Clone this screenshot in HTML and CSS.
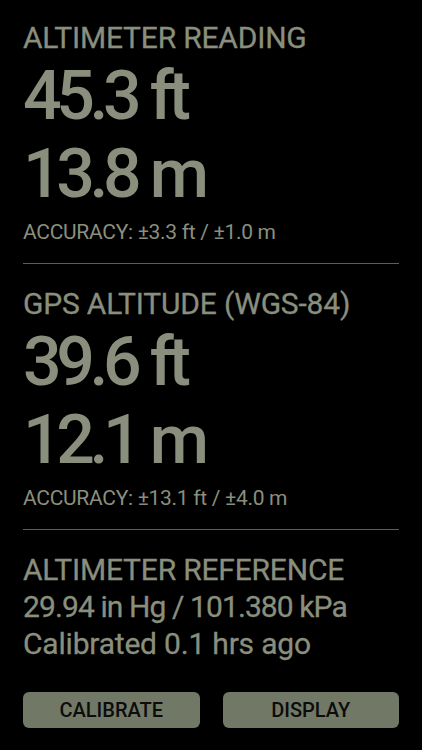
FILE: index.html
```html
<!DOCTYPE html>
<html lang="en">
<head>
    <meta charset="UTF-8">
    <meta name="viewport" content="width=device-width, initial-scale=1.0">
    <title>Altimeter</title>
    <link rel="stylesheet" href="styles.css">
</head>
<body>
    <div class="section first">
        <h2 class="label">ALTIMETER READING</h2>
        <div class="big">45.3 ft</div>
        <div class="big">13.8 m</div>
        <p class="accuracy">ACCURACY: ±3.3 ft / ±1.0 m</p>
    </div>

    <div class="section">
        <h2 class="label">GPS ALTITUDE (WGS-84)</h2>
        <div class="big">39.6 ft</div>
        <div class="big">12.1 m</div>
        <p class="accuracy">ACCURACY: ±13.1 ft / ±4.0 m</p>
    </div>

    <div class="section last">
        <h2 class="label">ALTIMETER REFERENCE</h2>
        <p class="info pressure">29.94 in Hg / 101.380 kPa</p>
        <p class="info">Calibrated 0.1 hrs ago</p>

        <div class="buttons">
            <button>CALIBRATE</button>
            <button>DISPLAY</button>
        </div>
    </div>
</body>
</html>
```
FILE: styles.css
```css
body {
    font-family: Roboto, "Liberation Sans", sans-serif;
    background-color: #000;
    color: #8a8f7d;
    margin: 0;
    padding: 0 23px;
    width: 376px;
    height: 750px;
    overflow: hidden;
}

.section {
    padding-top: 21px;
    padding-bottom: 18px;
    border-bottom: 1px solid #5c5f57;
}

.section.first {
    padding-top: 19px;
}

.section.last {
    border-bottom: none;
}

.label {
    font-size: 30px;
    font-weight: normal;
    line-height: 37px;
    letter-spacing: -0.2px;
    margin: 0;
    -webkit-text-stroke: 0.3px #8a8f7d;
}

.big {
    font-size: 68px;
    font-weight: 500;
    line-height: 78px;
    letter-spacing: -5.4px;
    word-spacing: 2px;
}

.label + .big {
    margin-top: 1px;
}

.accuracy {
    font-size: 21px;
    line-height: 26px;
    letter-spacing: -0.3px;
    margin: 6px 0 0;
}

.info {
    font-size: 30px;
    line-height: 37px;
    letter-spacing: -0.2px;
    margin: 0;
    -webkit-text-stroke: 0.3px #8a8f7d;
}

.info.pressure {
    letter-spacing: -0.9px;
}

.buttons {
    display: grid;
    grid-template-columns: 1fr 1fr;
    gap: 23px;
    margin-top: 30px;
}

button {
    font-family: Roboto, "Liberation Sans", sans-serif;
    font-size: 20px;
    font-weight: 500;
    color: #0c0c0c;
    background-color: #717866;
    border: none;
    border-radius: 6px;
    height: 36px;
    padding: 0;
}
```
